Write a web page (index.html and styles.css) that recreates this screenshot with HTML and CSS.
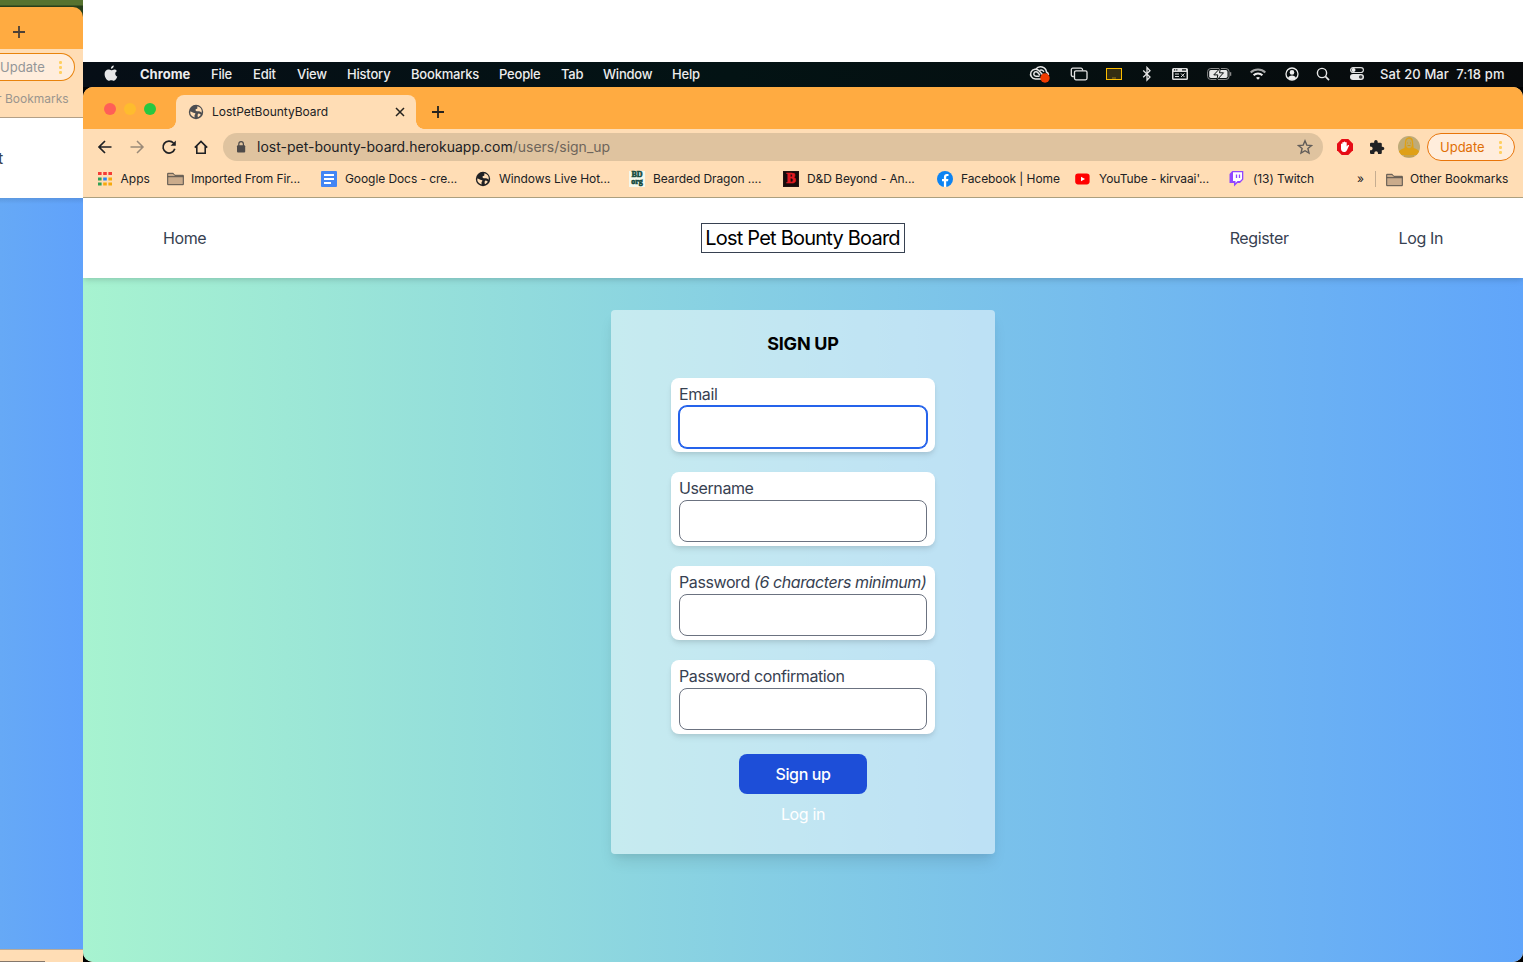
FILE: index.html
```html
<!DOCTYPE html>
<html lang="en">
<head>
<meta charset="utf-8">
<title>LostPetBountyBoard</title>
<link rel="stylesheet" href="styles.css">
</head>
<body>
<svg class="defs" width="0" height="0">
  <symbol id="globe" viewBox="0 0 16 16"><circle cx="8" cy="8" r="7.2" fill="currentColor"/><path class="globe-land" d="M2.200 7.500c1.700.2 2.500 1.300 4.300 1.400 1 .1 1.200 1 .5 1.500-.7.6-.4 1.500-.4 3A5.900 5.900 0 0 1 2.200 7.500zM9.500 2.300a5.900 5.900 0 0 1 4.200 6.500c-1-.8-1.500-1.800-3-1.600-1.600.3-3.300-.2-3.200-1.500 0-1 1.700-.6 1.900-1.500.1-.6-.4-1.200.1-1.900zM10.500 9.500c1 0 1.500.7 2.300 1-.6 1.300-1.500 2.100-2.900 2.700-.2-1.300-.8-2.800.6-3.700z"/></symbol>
  <symbol id="folder" viewBox="0 0 18 14"><path d="M.7 12.700V1.300h5.500l1.500 2h8.600v9.400z" fill="#caab8b" stroke="#55504b"/><path d="M.7 4.700h15.600" stroke="#55504b"/></symbol>
</svg>
<div class="back-window">
  <div class="back-desktop"><div class="back-tabs"><svg width="14" height="14" viewBox="0 0 14 14"><path d="M7 1v12M1 7h12" stroke="#4c4036" stroke-width="1.800"/></svg></div></div>
  <div class="back-tools">
    <div class="back-update"><span>Update</span><i class="dots"></i></div>
    <div class="back-bookmarks">r Bookmarks</div>
  </div>
  <div class="back-nav">t</div>
  <div class="back-page"></div>
  <div class="back-dock"></div>
</div>
<div class="screen">
  <div class="menubar">
    <svg class="apple" width="14" height="17" viewBox="0 0 14 17"><path fill="#e6e7e8" d="M9.800.5c.1 1.500-1.200 3.200-2.900 3.200C6.700 2.100 8.200.600 9.800.500zM12.900 5.900c-2.400 1.500-2 4.600.4 5.600-.6 1.700-2 4.300-3.400 4.300-1 0-1.400-.6-2.600-.6s-1.700.6-2.600.6C2.900 15.800.600 12.300.600 9.100c0-3 1.900-4.600 3.800-4.600 1.200 0 2 .7 2.900.7.900 0 1.800-.8 3.200-.8 1 0 1.900.6 2.400 1.500z"/></svg>
    <div class="menus"><b>Chrome</b><span>File</span><span>Edit</span><span>View</span><span>History</span><span>Bookmarks</span><span>People</span><span>Tab</span><span>Window</span><span>Help</span></div>
    <div class="tray">
      <svg width="22" height="18" viewBox="0 0 22 18" fill="none" stroke="#e5e5e5" stroke-width="1.500"><path d="M12 14H6.500a4.900 4.900 0 1 1 3.800-8l3.500 4M6.800 4.200A6 6 0 0 1 17.500 7c1.500.8 2 2 2 3"/><path d="M10.500 11.200H7a2.200 2.200 0 1 1 1.700-3.600l2.300 2.700M10.500 5.500c1.500-1 3.200-.4 4.500 1.200"/><circle cx="16" cy="13" r="4.700" fill="#f03c00" stroke="none"/></svg>
      <svg width="18" height="16" viewBox="0 0 18 16" fill="none" stroke="#e5e5e5" stroke-width="1.300"><path d="M3.800 10.500h-1A1.500 1.500 0 0 1 1.300 9V3.700a1.500 1.500 0 0 1 1.500-1.500H11a1.500 1.500 0 0 1 1.500 1.500v.8"/><rect x="4.500" y="4.800" width="12.500" height="9" rx="1.500"/></svg>
      <svg width="16" height="14" viewBox="0 0 16 14"><rect x=".5" y="1.500" width="15" height="11" fill="#342d12" stroke="#fdbd00"/><path d="M6 11h4" stroke="#79601b" stroke-width="1.500"/></svg>
      <svg width="10" height="16" viewBox="0 0 10 16" fill="none" stroke="#e5e5e5" stroke-width="1.300"><path d="M1.200 4.500 8 11l-3 3.200V1.500L8 4.800 1.200 11.200"/></svg>
      <svg width="16" height="14" viewBox="0 0 16 14"><path fill="#dedede" fill-rule="evenodd" d="M1.500 1h13Q16 1 16 2.500v9q0 1.500-1.500 1.500h-13Q0 13 0 11.500v-9Q0 1 1.500 1zM1.500 5v6.500h13V5zM2 2.300v1.200h1.200V2.300zM4.200 2.300v1.200h1.200V2.300zM10 2.300v1.200h4V2.300z"/><path d="M3 7h4M3 9.500h4M9 6.500l3.500 3.500M12.500 6.500 9 10" stroke="#dedede" fill="none"/></svg>
      <svg width="25" height="14" viewBox="0 0 25 14"><rect x=".6" y="1.500" width="21.500" height="11" rx="3.200" fill="none" stroke="#8b8b8b"/><rect x="2.200" y="3" width="18.300" height="8" rx="1.700" fill="#e9e9e9"/><path d="M13.500.8 6.800 7.900h4l-1 5.300 6.700-7.400h-4z" fill="#e9e9e9" stroke="#080d0e"/><path d="M23.600 5.200v3.600" stroke="#8b8b8b" stroke-width="1.300"/></svg>
      <svg width="18" height="14" viewBox="0 0 18 14" fill="none" stroke="#ececec" stroke-width="2"><path d="M1.700 5.500a10.300 10.300 0 0 1 14.600 0" stroke="#a3a5a5"/><path d="M4.600 8.300a6.200 6.200 0 0 1 8.800 0"/><path d="m7 10.700 2 2.100 2-2.100q-2-1.500-4 0z" fill="#ececec" stroke="none"/></svg>
      <svg width="14" height="14" viewBox="0 0 14 14"><circle cx="7" cy="7" r="6" fill="none" stroke="#eee" stroke-width="1.300"/><circle cx="7" cy="5.400" r="2.300" fill="#eee"/><path d="M3 11.200c.6-3.600 7.400-3.600 8 0-2.200 2-5.800 2-8 0z" fill="#eee"/></svg>
      <svg width="14" height="14" viewBox="0 0 14 14" fill="none" stroke="#e8e8e8"><circle cx="6" cy="6" r="4.600" stroke-width="1.400"/><path d="m9.400 9.400 3.600 3.700" stroke-width="1.700"/></svg>
      <svg width="16" height="15" viewBox="0 0 16 15"><rect x="1.600" y="1.700" width="12.800" height="4.800" rx="2.400" fill="none" stroke="#ddd" stroke-width="1.200"/><circle cx="4.500" cy="4" r="2" fill="#eee"/><rect x="1" y="8" width="14" height="6" rx="3" fill="#e8e8e8"/><circle cx="11.700" cy="11" r="1.800" fill="#383b3c"/></svg>
    </div>
    <time>Sat 20 Mar&nbsp; 7:18 pm</time>
  </div>
  <div class="window">
    <div class="tabstrip">
      <div class="lights"><i class="red"></i><i class="yellow"></i><i class="green"></i></div>
      <div class="tab"><svg class="tab-globe" width="16" height="16"><use href="#globe"/></svg><span>LostPetBountyBoard</span><svg width="10" height="10" viewBox="0 0 10 10"><path d="m1 1 8 8M9 1 1 9" stroke="#25221e" stroke-width="1.500"/></svg></div>
      <svg class="plus" width="14" height="14" viewBox="0 0 14 14"><path d="M7 1v12M1 7h12" stroke="#25221e" stroke-width="1.800"/></svg>
    </div>
    <div class="toolbar">
      <div class="nav-buttons">
        <svg width="16" height="16" viewBox="0 0 16 16" fill="none" stroke="#202124" stroke-width="1.700"><path d="M14.500 8H2M8 2 2 8l6 6"/></svg>
        <svg width="16" height="16" viewBox="0 0 16 16" fill="none" stroke="#9b8a78" stroke-width="1.500"><path d="M1.500 8H14M8 2l6 6-6 6"/></svg>
        <svg width="16" height="16" viewBox="0 0 16 16" fill="none" stroke="#202124" stroke-width="1.700"><path d="M12.500 4A6 6 0 1 0 13.800 9.800"/><path d="M14.800 1.500v5.300H9.500z" fill="#202124" stroke="none"/></svg>
        <svg width="16" height="16" viewBox="0 0 16 16" fill="none" stroke="#202124" stroke-width="1.600"><path d="M1.800 8.600 8 2.400l6.200 6.200M3.800 7v7.200h8.400V7"/></svg>
      </div>
      <div class="omnibox">
        <svg width="10" height="12" viewBox="0 0 10 12"><rect x="1" y="4.300" width="8.200" height="7.200" rx="1" fill="#4e4a49"/><path d="M2.800 5V3a2.300 2.300 0 0 1 4.600 0v2" fill="none" stroke="#4e4a49" stroke-width="1.200"/></svg>
        <span class="url">lost-pet-bounty-board.herokuapp.com<em>/users/sign_up</em></span>
        <svg width="16" height="16" viewBox="0 0 16 16"><path d="m8 1.800 1.800 4.300 4.700.4-3.600 3 1.100 4.600L8 11.700l-4 2.400 1.100-4.600-3.600-3 4.700-.4z" fill="none" stroke="#625d59" stroke-width="1.400"/></svg>
      </div>
      <svg class="blocker" width="18" height="18" viewBox="0 0 18 18"><path d="M5.700 1h6.600L17 5.700v6.600L12.300 17H5.700L1 12.300V5.700z" fill="#e60c16"/><path d="M5 7V6q.6-.8 1.300 0V4.500q.7-.8 1.400 0V4q.8-.9 1.500 0v.5q.8-.8 1.500 0v4l1-1.300c.8-.7 1.700-.1 1.200.8l-2 4.200Q10.200 14 8.800 14H8c-2 0-3-1.500-3-3.200z" fill="#fff"/></svg>
      <svg class="puzzle" width="16" height="16" viewBox="0 0 16 16"><path fill="#202124" d="M1 5q0-1.200 1.200-1.200h3C4.500 0 9.200 0 8.700 3.800h2.800q1.300 0 1.300 1.200v2.700c3.300-.4 3.300 3.900 0 3.500v2.700q0 1.100-1.300 1.100H9c.3-3.700-4-3.700-3.700 0H2.200Q1 15 1 13.900v-2.700c3.500.3 3.500-3.900 0-3.600z"/></svg>
      <svg class="avatar" width="22" height="22" viewBox="0 0 22 22"><defs><clipPath id="av"><circle cx="11" cy="11" r="11"/></clipPath></defs><g clip-path="url(#av)"><path fill="#bfab78" d="M0 0h22v22H0z"/><path fill="#dfa016" d="M7 5c1-5 8-5 8 0l.7 7c3 1 5.300 2 6.300 5v2H0v-2c1-3 4-4 6.500-5z"/><ellipse cx="11" cy="7.500" rx="3" ry="4.800" fill="#c5aa62"/><path d="M9 7h1m2 0h1M9.500 9.500h3M6 20h10" stroke="#cf981e"/></g></svg>
      <div class="update"><span>Update</span><i class="dots"></i></div>
    </div>
    <div class="bookmarks">
      <div class="bm"><svg width="16" height="16" viewBox="0 0 16 16"><path d="M1 2.500h14" stroke="#f43b36" stroke-width="3" stroke-dasharray="3.600 1.600"/><path d="M1 8h3.600M1 13h3.600" stroke="#30a055" stroke-width="3"/><path d="M6.200 8h3.600" stroke="#2586f2" stroke-width="3"/><path d="M11.400 8H15M6.200 13h3.600M11.400 13H15" stroke="#f6a90d" stroke-width="3"/></svg><span>Apps</span></div>
      <div class="bm"><svg width="18" height="14"><use href="#folder"/></svg><span>Imported From Fir...</span></div>
      <div class="bm"><svg width="16" height="16" viewBox="0 0 16 16"><rect width="16" height="16" rx="1" fill="#4285f4"/><path d="M3 4h10M3 8h10M3 12h7" stroke="#fff" stroke-width="2"/></svg><span>Google Docs - cre...</span></div>
      <div class="bm"><svg width="16" height="16"><use href="#globe"/></svg><span>Windows Live Hot...</span></div>
      <div class="bm"><i class="bd-icon"><b>BD</b><b>org</b></i><span>Bearded Dragon ....</span></div>
      <div class="bm"><i class="dnd-icon">B</i><span>D&amp;D Beyond - An...</span></div>
      <div class="bm"><svg width="16" height="16" viewBox="0 0 16 16"><circle cx="8" cy="8" r="8" fill="#0d83f2"/><path fill="#fff" d="M6.900 16v-5.700H5V8h1.900V6.200c0-2.100 1.200-3.200 3-3.200.9 0 1.600.1 1.600.1v1.900h-1c-1 0-1.300.6-1.300 1.300V8h2.200l-.4 2.300H9.200V16z"/></svg><span>Facebook | Home</span></div>
      <div class="bm"><svg width="15" height="16" viewBox="0 0 15 16"><rect x=".2" y="2.600" width="14.400" height="10.800" rx="2.800" fill="#f00"/><path d="m6 5.700 4 2.300-4 2.300z" fill="#fff"/></svg><span>YouTube - kirvaai'...</span></div>
      <div class="bm"><svg width="15" height="16" viewBox="0 0 15 16"><path d="M3.300 0h11v8.500L11 12H8.500L5 15.500V12H.5V3z" fill="#9146ff"/><path d="M4 1.200h9v6.700L11 10H8.500l-2 2v-2H4z" fill="#fff"/><path d="M7.500 3.500V7M10.500 3.500V7" stroke="#9146ff" stroke-width="1.300"/></svg><span>(13) Twitch</span></div>
      <div class="more">»</div>
      <div class="bm other"><svg width="18" height="14"><use href="#folder"/></svg><span>Other Bookmarks</span></div>
    </div>
    <nav class="site-nav"><a class="home">Home</a><h1>Lost Pet Bounty Board</h1><div class="account"><a>Register</a><a>Log In</a></div></nav>
    <main>
      <form class="card">
        <h2>SIGN UP</h2>
        <div class="field active"><label for="e">Email</label><input id="e"></div>
        <div class="field"><label for="u">Username</label><input id="u"></div>
        <div class="field"><label for="p">Password <em>(6 characters minimum)</em></label><input id="p" type="password"></div>
        <div class="field"><label for="c">Password confirmation</label><input id="c" type="password"></div>
        <button type="button">Sign up</button>
        <a class="login">Log in</a>
      </form>
    </main>
  </div>
</div>
</body>
</html>
```
FILE: styles.css
```css
* { box-sizing: border-box; }
body { margin: 0; width: 1523px; height: 962px; overflow: hidden; display: flex; background: #fff; font-family: Inter, "Liberation Sans", sans-serif; color: #202124; }
svg { display: block; flex: none; }
.defs { position: absolute; }
i, em { font-style: normal; }

.back-window { width: 83px; display: flex; flex-direction: column; flex: none; }
.back-desktop { height: 49px; padding-top: 7px; background: linear-gradient(#56722f 0 5px, #273f1b 6px 100%); }
.back-tabs { height: 42px; background: #ffab41; border-top-right-radius: 10px; padding: 18px 0 0 12px; }
.back-tools { height: 69px; background: #ffddb5; border-bottom: 1px solid #b3a087; padding-top: 4px; }
.back-update { width: 75px; height: 28px; border: 1px solid #e8830c; border-left: 0; border-radius: 0 14px 14px 0; background: #ffeddc; color: #939698; font-size: 13px; line-height: 26px; display: flex; align-items: center; justify-content: space-between; padding-right: 12px; letter-spacing: .05px; }
.dots { width: 3px; height: 14px; background: radial-gradient(circle, #ffcf60 1.300px, transparent 1.700px) 0 0 / 3px 5px; }
.back-bookmarks { height: 36px; line-height: 36px; font-size: 12px; color: #9a958e; white-space: nowrap; letter-spacing: 0; margin-left: -3px; }
.back-nav { height: 80px; background: #fff; color: #374151; line-height: 80px; font-size: 16px; margin-left: -2px; }
.back-page { height: 751px; background: linear-gradient(#00000018, transparent 6px), linear-gradient(90deg, #66a9f6, #60a2fb); }
.back-dock { height: 13px; background: linear-gradient(#85776a, #85776a) 0 100% / 45px 1px no-repeat #ffddb5; border-top: 1px solid #b9aa98; }

.screen { width: 1440px; padding-top: 62px; display: flex; flex-direction: column; flex: none; background: linear-gradient(#fff 62px, #000 62px); }
.menubar { height: 25px; background: linear-gradient(90deg, #060e16, #031314 45%, #080a0c); color: #ececed; display: flex; align-items: center; padding: 0 18px 2px 21px; font-size: 13px; }
.apple { margin-right: 22px; }
.menus { display: grid; grid-template-columns: 71px 42px 44px 50px 64px 88px 62px 42px 69px 40px; font-weight: 500; letter-spacing: -.2px; }
.menus b { font-weight: 700; letter-spacing: 0; }
.tray { margin-left: 317px; display: grid; grid-template-columns: 41px 36px 36px 30px 35px 42px 36px 31px 33px 31px; align-items: center; }
.menubar time { white-space: nowrap; letter-spacing: .12px; font-weight: 500; }

.window { height: 875px; border-radius: 10px; overflow: hidden; display: flex; flex-direction: column; background: #ffddb5; }
.tabstrip { height: 42px; background: #ffab41; display: flex; padding-left: 21px; }
.lights { display: flex; gap: 8px; width: 72px; padding-top: 16px; }
.lights i { width: 12px; height: 12px; border-radius: 50%; }
.red { background: #ff5f57; } .yellow { background: #febc2e; } .green { background: #28c840; }
.tab { width: 240px; height: 34px; margin-top: 8px; background: #ffddb5; border-radius: 8px 8px 0 0; display: flex; align-items: center; padding: 0 11px 0 12px; font-size: 12px; position: relative; }
.tab::before, .tab::after { content: ""; position: absolute; bottom: 0; width: 8px; height: 8px; }
.tab::before { left: -8px; background: radial-gradient(circle at 0 0, transparent 7.500px, #ffddb5 8px); }
.tab::after { right: -8px; background: radial-gradient(circle at 100% 0, transparent 7.500px, #ffddb5 8px); }
.tab span { margin-left: 8px; flex: 1; letter-spacing: -.02px; padding-bottom: 2px; }
.tab-globe { color: #4c4d50; }
.globe-land { fill: #ffddb5; }
.plus { margin: 18px 0 0 15px; }
.toolbar { height: 36px; display: flex; align-items: center; }
.nav-buttons { width: 140px; display: flex; gap: 16px; padding-left: 14px; }
.omnibox { width: 1100px; height: 28px; background: #dfc39f; border-radius: 14px; display: flex; align-items: center; padding: 0 10px 0 13px; font-size: 14px; }
.url { flex: 1; margin-left: 11px; letter-spacing: 0; padding-bottom: 2px; }
.url em { color: #6e655b; }
.blocker { margin-left: 13px; }
.puzzle { margin-left: 15px; }
.avatar { margin-left: 13px; }
.update { margin-left: 7px; width: 88px; height: 28px; border: 1px solid #e8750a; border-radius: 14px; background: #ffeddc; color: #df6f05; font-size: 13px; display: flex; align-items: center; justify-content: space-between; padding: 0 12px; letter-spacing: 0; }
.bookmarks { height: 33px; border-bottom: 1px solid #ada080; display: grid; grid-template-columns: 70px 154px 154px 154px 154px 154px 138px 154px 128px 18px 1fr; padding-left: 14px; padding-bottom: 4px; align-items: center; font-size: 12px; white-space: nowrap; letter-spacing: -.08px; }
.bm { display: grid; grid-template-columns: 24px auto; justify-content: start; align-items: center; }
.bm:first-child { grid-template-columns: 23.500px auto; letter-spacing: 0; }
.bm svg { justify-self: start; }
.bm span, .more { padding-bottom: 2px; }
.other { border-left: 1px solid #c5ad91; padding-left: 10px; height: 16px; letter-spacing: -.03px; }
.bd-icon { width: 16px; height: 16px; background: #f4f8ed; color: #164b40; font: 900 8px/8px "Liberation Serif", serif; text-align: center; -webkit-text-stroke: .6px #164b40; letter-spacing: 0; }
.bd-icon b { display: block; height: 7px; }
.dnd-icon { width: 16px; height: 16px; border: 1px solid #221312; background: #170b0b; color: #e11b23; font: 900 14px/14px "Liberation Serif", serif; text-align: center; -webkit-text-stroke: .7px #e11b23; letter-spacing: 0; }
.site-nav { height: 80px; flex: none; background: #fff; display: grid; grid-template-columns: 1fr auto 1fr; align-items: center; padding: 0 80px; font-size: 16px; color: #374151; position: relative; box-shadow: 0 4px 6px -1px #0000001a, 0 2px 4px -1px #0000000f; letter-spacing: -.38px; }
.site-nav h1 { margin: 0; height: 30px; width: 204px; border: 1px solid #374151; color: #000; text-align: center; font-size: 20px; line-height: 28px; font-weight: 400; letter-spacing: -.78px; white-space: nowrap; padding-right: 1px; }
.account { display: flex; justify-content: flex-end; gap: 110px; }
main { flex: 1; background: linear-gradient(90deg, #a7f3d0, #60a5fa); display: flex; justify-content: center; align-items: flex-start; padding-top: 32px; }
.card { width: 384px; height: 544px; padding: 20px 60px 0; border-radius: 4px; background: #ffffff80; box-shadow: 0 10px 15px -3px #0000001a, 0 4px 6px -2px #0000000d; display: flex; flex-direction: column; align-items: center; font-size: 16px; }
.card h2 { margin: 0 0 20px; font-size: 18px; line-height: 28px; font-weight: 700; color: #000; letter-spacing: -.25px; }
.field { width: 264px; height: 74px; margin-bottom: 20px; padding: 4px 8px; background: #fff; border-radius: 8px; box-shadow: 0 4px 6px -1px #0000001a, 0 2px 4px -1px #0000000f; }
.field label { display: block; height: 24px; line-height: 24px; color: #374151; white-space: nowrap; letter-spacing: -.4px; }
.field em { font-style: italic; }
.field input { display: block; width: 248px; height: 42px; border: 1px solid #6b7280; border-radius: 8px; margin: 0; background: #fff; outline: 0; }
.active input { border-color: #2563eb; box-shadow: 0 0 0 1px #2563eb; }
.card button { width: 128px; height: 40px; border: 0; border-radius: 8px; background: #1d4ed8; color: #fff; font: 500 16px Inter, sans-serif; letter-spacing: -.4px; }
.login { margin-top: 8px; line-height: 24px; color: #fff; letter-spacing: -.35px; }
```
